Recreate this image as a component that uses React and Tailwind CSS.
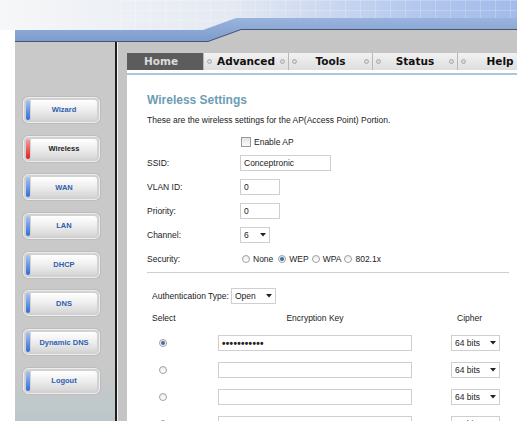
import React from "react";

const sideItems = [
  { label: "Wizard" },
  { label: "Wireless", active: true },
  { label: "WAN" },
  { label: "LAN" },
  { label: "DHCP" },
  { label: "DNS" },
  { label: "Dynamic DNS" },
  { label: "Logout" },
];

const tabs = [
  { label: "Home", w: "w-[76px]", active: true },
  { label: "Advanced", w: "w-[85px]" },
  { label: "Tools", w: "w-[84px]" },
  { label: "Status", w: "w-[85px]" },
  { label: "Help", w: "w-[85px]" },
];

function Header() {
  return (
    <svg width="517" height="42" viewBox="0 0 517 42" className="block">
      <defs>
        <linearGradient id="sky" x1="0" y1="0" x2="1" y2="0">
          <stop offset="0" stopColor="#f6f7f8" />
          <stop offset="0.45" stopColor="#e4e9f2" />
          <stop offset="0.8" stopColor="#b4c8ee" />
          <stop offset="1" stopColor="#a2bbea" />
        </linearGradient>
        <pattern id="grid" width="15" height="10" patternUnits="userSpaceOnUse">
          <path d="M15 0 L0 0 0 10" fill="none" stroke="#ffffff" strokeOpacity="0.7" strokeWidth="1" />
        </pattern>
        <linearGradient id="band" x1="0" y1="0" x2="0" y2="1">
          <stop offset="0" stopColor="#9ab4de" />
          <stop offset="1" stopColor="#7c9acc" />
        </linearGradient>
      </defs>
      <rect x="0" y="0" width="517" height="42" fill="url(#sky)" />
      <rect x="120" y="0" width="397" height="30" fill="url(#grid)" opacity="0.6" />
      <rect x="0" y="30" width="15" height="12" fill="#ffffff" />
      <polygon points="208,42 241,30 517,30 517,42" fill="#c6c6c6" />
      <polygon points="15,30 203,30 236,18 517,18 517,30 241,30 208,42 15,42" fill="url(#band)" />
      <polyline points="15,41.5 208,41.5 241,29.5 517,29.5" fill="none" stroke="#4a5570" strokeWidth="1" />
    </svg>
  );
}

function SideButton({ label, active }) {
  return (
    <div className="w-[77px] h-[26px] rounded-[5px] border border-[#ececec] bg-[#d2d2d2] p-[2px] flex gap-[1px] shadow-[0_0_0_1px_#bdbdbd]">
      <div
        className={`w-[4px] rounded-[2px] ${
          active
            ? "bg-[linear-gradient(to_bottom,#f0a0a0,#e02020)]"
            : "bg-[linear-gradient(to_bottom,#a8c4f0,#2f6cd8)]"
        }`}
      />
      <div
        className={`flex-1 rounded-r-[3px] flex items-center justify-center bg-[linear-gradient(to_bottom,#ffffff,#eeeeee_50%,#d6d6d6)] text-[7.5px] font-bold ${
          active ? "text-[#222]" : "text-[#2e5fae]"
        }`}
      >
        {label}
      </div>
    </div>
  );
}

function Radio({ checked }) {
  return (
    <span className="inline-flex w-[8px] h-[8px] rounded-full border border-[#a0a0a0] bg-[linear-gradient(to_bottom,#ececec,#ffffff)] items-center justify-center">
      {checked && <span className="w-[4px] h-[4px] rounded-full bg-[#3c6fa8]" />}
    </span>
  );
}

function Caret() {
  return (
    <svg width="6" height="4" viewBox="0 0 6 4" className="shrink-0">
      <path d="M0 0 H6 L3 3.5 Z" fill="#222" />
    </svg>
  );
}

function Select({ value, w }) {
  return (
    <div className={`${w} h-[16px] border border-[#cfcfcf] bg-white flex items-center justify-between pl-[3px] pr-[3px]`}>
      <span>{value}</span>
      <Caret />
    </div>
  );
}

function Field({ value, w }) {
  return (
    <div className={`${w} h-[16px] border border-[#cfcfcf] bg-white flex items-center px-[3px]`}>
      {value}
    </div>
  );
}

function Row({ label, children }) {
  return (
    <div className="flex items-center h-[16px]">
      <span className="w-[93px] shrink-0">{label}</span>
      {children}
    </div>
  );
}

export default function App() {
  return (
    <div className="w-[517px] h-[421px] overflow-hidden bg-white font-['Liberation_Sans',Arial,sans-serif] text-[8.5px] text-[#222]">
      <Header />

      <div className="flex h-[379px] pl-[15px]">
        {/* sidebar */}
        <aside className="w-[100px] shrink-0 bg-[linear-gradient(to_bottom,#c9c9c9_85%,#bcc7cb)] flex flex-col pl-[8px] pt-[55px] gap-[12.7px]">
          {sideItems.map((it) => (
            <SideButton key={it.label} {...it} />
          ))}
        </aside>
        <div className="w-[2px] shrink-0 bg-[#1e1e1e]" />
        <div className="w-[1px] shrink-0 bg-[#f4f4f4]" />

        {/* main */}
        <main className="flex-1 min-w-0 overflow-hidden bg-[#c5c5c5] pl-[9px] pt-[11px] flex flex-col">
          <nav className="flex h-[17px] font-['DejaVu_Sans',sans-serif] font-bold text-[10.5px] shrink-0">
            {tabs.map((t) =>
              t.active ? (
                <div
                  key={t.label}
                  className={`${t.w} shrink-0 bg-[#5c5c5c] text-[#dcdcdc] flex items-center pl-[17px]`}
                >
                  {t.label}
                </div>
              ) : (
                <div
                  key={t.label}
                  className={`${t.w} shrink-0 relative bg-[linear-gradient(to_bottom,#f2f2f2,#dedede)] border-l border-[#b8b8b8] text-[#111] flex items-center justify-center`}
                >
                  <span className="absolute left-[3px] top-[6px] w-[5px] h-[5px] rounded-full border border-[#aaa] bg-[#d8d8d8]" />
                  {t.label}
                  <span className="absolute right-[3px] top-[6px] w-[5px] h-[5px] rounded-full border border-[#aaa] bg-[#d8d8d8]" />
                </div>
              )
            )}
          </nav>
          <div className="h-[3px] bg-white shrink-0" />
          <div className="h-[2px] bg-[#aec6dc] shrink-0" />

          <section className="flex-1 bg-white pl-[20px] pt-[17px] flex flex-col">
            <h1 className="h-[16px] text-[12px] font-bold text-[#6d9db4] leading-[16px]">
              Wireless Settings
            </h1>
            <p className="h-[14px] mt-[5px] leading-[14px] whitespace-nowrap">
              These are the wireless settings for the AP(Access Point) Portion.
            </p>
            <div className="h-[14px] mt-[8px] flex items-center pl-[94px] gap-[3px]">
              <span className="w-[10px] h-[10px] border border-[#9a9a9a] bg-[linear-gradient(to_bottom,#e4e4e4,#fafafa)]" />
              <span>Enable AP</span>
            </div>

            <div className="mt-[6px] flex flex-col gap-[8px]">
              <Row label="SSID:">
                <Field value="Conceptronic" w="w-[91px]" />
              </Row>
              <Row label="VLAN ID:">
                <Field value="0" w="w-[40px]" />
              </Row>
              <Row label="Priority:">
                <Field value="0" w="w-[40px]" />
              </Row>
              <Row label="Channel:">
                <Select value="6" w="w-[30px]" />
              </Row>
              <Row label="Security:">
                <div className="flex items-center pl-[2px] whitespace-nowrap">
                  <Radio />
                  <span className="ml-[3px] mr-[5px]">None</span>
                  <Radio checked />
                  <span className="ml-[3px] mr-[3px]">WEP</span>
                  <Radio />
                  <span className="ml-[3px] mr-[3px]">WPA</span>
                  <Radio />
                  <span className="ml-[3px]">802.1x</span>
                </div>
              </Row>
            </div>

            <div className="mt-[5px] mr-[8px] h-[1px] bg-[#cfcfcf]" />

            <div className="mt-[15px] pl-[5px] h-[16px] flex items-center gap-[2px]">
              <span>Authentication Type:</span>
              <Select value="Open" w="w-[45px]" />
            </div>

            <div className="mt-[7px] pl-[5px] h-[14px] flex items-center whitespace-nowrap">
              <span className="w-[66px] shrink-0">Select</span>
              <span className="w-[194px] shrink-0 text-center">Encryption Key</span>
              <span className="pl-[45px]">Cipher</span>
            </div>

            <div className="mt-[10px] flex flex-col gap-[11px]">
              {[true, false, false, false].map((sel, i) => (
                <div key={i} className="flex items-center h-[16px] shrink-0">
                  <span className="w-[71px] shrink-0 pl-[12px] flex">
                    <Radio checked={sel} />
                  </span>
                  <div className="w-[194px] shrink-0 h-[16px] border border-[#cfcfcf] bg-white flex items-center px-[3px] text-[10px] font-bold tracking-[0.3px]">
                    {sel ? "•••••••••••" : ""}
                  </div>
                  <div className="ml-[39px] shrink-0">
                    <Select value="64 bits" w="w-[49px]" />
                  </div>
                </div>
              ))}
            </div>
          </section>
        </main>
      </div>
    </div>
  );
}
